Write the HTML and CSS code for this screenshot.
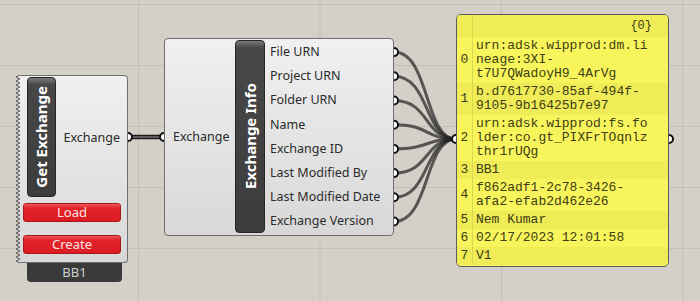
FILE: index.html
```html
<!DOCTYPE html>
<html lang="en">
<head>
  <meta charset="UTF-8" />
  <title>Exchange Info</title>
  <link rel="stylesheet" href="styles.css">
</head>
<body>
  <div class="canvas">

    <svg class="wires" width="700" height="301" viewBox="0 0 700 301">
      <!-- straight wire between the two components -->
      <path class="wire-out" d="M128 137 L164 137" />
      <path class="wire-in" d="M128 137 L164 137" />

      <!-- fan of wires into the panel -->
      <g class="fan">
        <path d="M394 52.1 C430 52.1 424 139 456 139" />
        <path d="M394 76.3 C430 76.3 424 139 456 139" />
        <path d="M394 100.5 C430 100.5 424 139 456 139" />
        <path d="M394 124.7 C430 124.7 424 139 456 139" />
        <path d="M394 148.9 C430 148.9 424 139 456 139" />
        <path d="M394 173.1 C430 173.1 424 139 456 139" />
        <path d="M394 197.3 C430 197.3 424 139 456 139" />
        <path d="M394 221.5 C430 221.5 424 139 456 139" />
      </g>

      <g class="ports">
        <circle cx="128" cy="137" r="4" />
        <circle cx="164" cy="137" r="4" />
        <circle cx="394" cy="52.1" r="4" />
        <circle cx="394" cy="76.3" r="4" />
        <circle cx="394" cy="100.5" r="4" />
        <circle cx="394" cy="124.7" r="4" />
        <circle cx="394" cy="148.9" r="4" />
        <circle cx="394" cy="173.1" r="4" />
        <circle cx="394" cy="197.3" r="4" />
        <circle cx="394" cy="221.5" r="4" />
        <circle cx="456" cy="139" r="4" />
        <circle cx="669" cy="139" r="4" />
      </g>
    </svg>

    <!-- Get Exchange -->
    <div class="node node-get">
      <div class="comp-body get-body">
        <svg class="zigzag" width="6" height="188">
          <defs>
            <pattern id="zz" width="6" height="4" patternUnits="userSpaceOnUse">
              <path d="M0 0 L5 0 L1 2 L5 4 L0 4 Z" fill="#d4d0c8" />
              <path d="M5 0 L1 2 L5 4" fill="none" stroke="#555" stroke-width="1" />
            </pattern>
          </defs>
          <rect width="6" height="188" fill="url(#zz)" />
        </svg>
        <div class="get-top">
          <div class="bar"><span>Get Exchange</span></div>
          <div class="get-out">Exchange</div>
        </div>
        <div class="btn btn-load">Load</div>
        <div class="btn btn-create">Create</div>
      </div>
      <div class="nick">BB1</div>
    </div>

    <!-- Exchange Info -->
    <div class="node node-info comp-body">
      <div class="info-in">Exchange</div>
      <div class="bar info-bar"><span>Exchange Info</span></div>
      <div class="info-outs">
        <div>File URN</div>
        <div>Project URN</div>
        <div>Folder URN</div>
        <div>Name</div>
        <div>Exchange ID</div>
        <div>Last Modified By</div>
        <div>Last Modified Date</div>
        <div>Exchange Version</div>
      </div>
    </div>

    <!-- Panel -->
    <div class="node panel">
      <div class="prow phead"><span class="idx"></span><span class="val">{0}</span></div>
      <div class="prow"><span class="idx">0</span><span class="val">urn:adsk.wipprod:dm.li<br>neage:3XI-<br>t7U7QWadoyH9_4ArVg</span></div>
      <div class="prow"><span class="idx">1</span><span class="val">b.d7617730-85af-494f-<br>9105-9b16425b7e97</span></div>
      <div class="prow"><span class="idx">2</span><span class="val">urn:adsk.wipprod:fs.fo<br>lder:co.gt_PIXFrTOqnlz<br>thr1rUQg</span></div>
      <div class="prow"><span class="idx">3</span><span class="val">BB1</span></div>
      <div class="prow"><span class="idx">4</span><span class="val">f862adf1-2c78-3426-<br>afa2-efab2d462e26</span></div>
      <div class="prow"><span class="idx">5</span><span class="val">Nem Kumar</span></div>
      <div class="prow"><span class="idx">6</span><span class="val">02/17/2023 12:01:58</span></div>
      <div class="prow"><span class="idx">7</span><span class="val">V1</span></div>
    </div>

  </div>
</body>
</html>
```

FILE: styles.css
```css
body {
  margin: 0;
  font-family: "Noto Sans", Arial, sans-serif;
  color: #2b2b2b;
}

.canvas {
  position: relative;
  width: 700px;
  height: 301px;
  overflow: hidden;
  background-color: #d4d0c8;
  background-image:
    linear-gradient(to right, #c4c0b8 1px, transparent 1px),
    linear-gradient(to bottom, #c4c0b8 1px, transparent 1px);
  background-size: 181.5px 100%, 100% 61px;
  background-position: 138px 0, 0 4px;
}

/* wires */
.wires {
  position: absolute;
  top: 0;
  left: 0;
}

.wire-out {
  stroke: #1a1a1a;
  stroke-width: 4.5;
}

.wire-in {
  stroke: #5c5c5c;
  stroke-width: 1.8;
}

.fan path {
  fill: none;
  stroke: #262626;
  stroke-width: 3;
  stroke-opacity: 0.72;
}

.ports circle {
  fill: #fff;
  stroke: #111;
  stroke-width: 2;
}

/* components */
.node {
  position: absolute;
  box-sizing: border-box;
}

.comp-body {
  box-sizing: border-box;
  background: linear-gradient(#f0f0f0, #d8d8d8);
  border: 1px solid #6f6f6f;
  border-radius: 4px;
}

.bar {
  box-sizing: border-box;
  width: 29px;
  display: flex;
  align-items: center;
  justify-content: center;
  background: linear-gradient(#7a7a7a 0, #474747 7px, #3c3c3c 100%);
  border: 1px solid #262626;
  border-radius: 4px;
  color: #fff;
}

.bar span {
  writing-mode: vertical-rl;
  transform: rotate(180deg);
  font-weight: 700;
  font-size: 15px;
  line-height: 1;
}

/* get exchange */
.node-get {
  left: 15px;
  top: 75px;
  width: 113px;
}

.get-body {
  position: relative;
  height: 188px;
  padding: 1px 6px 8px 8px;
  border-left: none;
  border-radius: 0 4px 4px 0;
}

.zigzag {
  position: absolute;
  left: 0;
  top: -1px;
}

.get-top {
  display: flex;
  height: 120px;
}

.get-top .bar {
  margin-left: 4px;
}

.get-out {
  flex: 1;
  display: flex;
  align-items: center;
  justify-content: flex-end;
  padding-right: 1px;
  font-size: 12.5px;
}

.btn {
  box-sizing: border-box;
  height: 19px;
  border: 1px solid #a81616;
  border-radius: 3px;
  background: linear-gradient(#f0585a 0, #e2242a 4px, #dc1c22 100%);
  color: #fbe4e4;
  font-size: 13px;
  line-height: 17px;
  text-align: center;
}

.btn-load {
  margin-top: 6px;
}

.btn-create {
  margin-top: 13px;
}

.nick {
  margin-left: 12px;
  width: 95px;
  height: 19px;
  background: #3a3a3a;
  border-radius: 0 0 4px 4px;
  color: #cfcfcf;
  font-size: 13px;
  line-height: 19px;
  text-align: center;
}

/* exchange info */
.node-info {
  left: 164px;
  top: 38px;
  width: 230px;
  height: 198px;
  display: flex;
  padding: 1px 0 2px 0;
}

.info-in {
  width: 70px;
  display: flex;
  align-items: center;
  padding-left: 8px;
  box-sizing: border-box;
  font-size: 12.5px;
}

.info-bar {
  width: 30px;
}

.info-outs {
  padding-left: 5px;
  font-size: 12.5px;
}

.info-outs div {
  height: 24.2px;
  line-height: 24.2px;
  white-space: nowrap;
}

/* panel */
.panel {
  left: 456px;
  top: 14px;
  width: 213px;
  height: 253px;
  border: 1px solid #5c5c5c;
  border-radius: 5px;
  overflow: hidden;
  background: #f8f55c;
  font-family: "Liberation Mono", "Courier New", monospace;
  font-size: 13px;
  color: #3d3d12;
}

.prow {
  display: flex;
  line-height: 14px;
}

.prow:nth-child(odd) {
  background: #efec58;
}

.prow .idx {
  width: 16px;
  flex: none;
  display: flex;
  align-items: center;
  justify-content: center;
  border-right: 1px solid #dcd84e;
  box-sizing: border-box;
}

.prow .val {
  padding: 2px 0 2px 3px;
}

.phead {
  height: 22px;
  background: #d6d24c;
}

.phead .val {
  flex: 1;
  text-align: right;
  padding: 4px 16px 0 0;
  font-size: 12px;
}
```
